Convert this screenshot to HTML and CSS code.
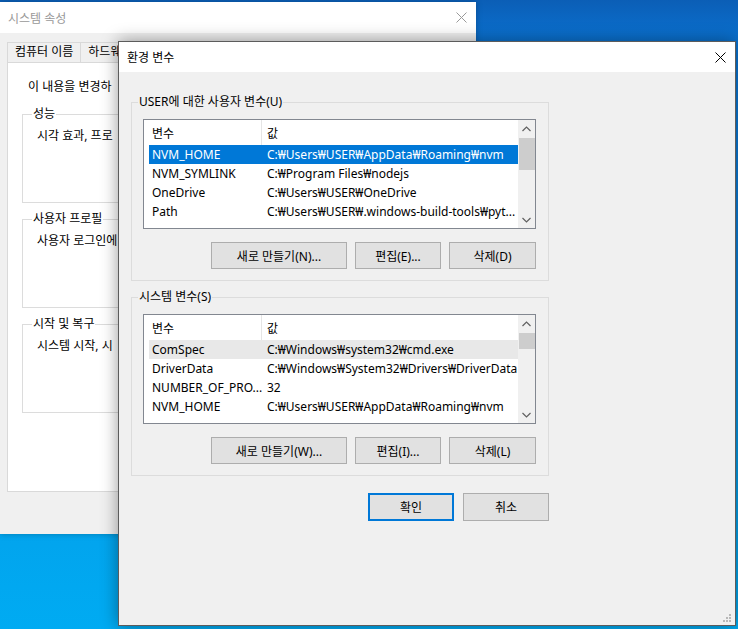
FILE: index.html
```html
<!DOCTYPE html>
<html lang="ko">
  <head>
    <meta charset="UTF-8" />
    <meta name="viewport" content="width=device-width, initial-scale=1.0" />
    <title>환경 변수</title>
    <link rel="stylesheet" href="styles.css">
  </head>
  <body>
    <div class="desktop">
      <!-- 뒤쪽 창: 시스템 속성 (대부분 앞 창에 가려짐) -->
      <div class="window sys-props">
        <div class="titlebar">
          <span class="title">시스템 속성</span>
          <svg class="close" width="11" height="11" viewBox="0 0 11 11">
            <path d="M0.5 0.5L10.5 10.5M10.5 0.5L0.5 10.5" />
          </svg>
        </div>
        <div class="tabs">
          <span class="tab">컴퓨터 이름</span>
          <span class="tab">하드웨</span>
        </div>
        <div class="tab-panel">
          <p class="notice">이 내용을 변경하</p>
          <fieldset class="sys-group">
            <legend>성능</legend>
            <p>시각 효과, 프로</p>
          </fieldset>
          <fieldset class="sys-group">
            <legend>사용자 프로필</legend>
            <p>사용자 로그인에</p>
          </fieldset>
          <fieldset class="sys-group">
            <legend>시작 및 복구</legend>
            <p>시스템 시작, 시</p>
          </fieldset>
        </div>
      </div>

      <!-- 앞쪽 창: 환경 변수 -->
      <div class="window env-vars">
        <div class="titlebar">
          <span class="title">환경 변수</span>
          <svg class="close" width="11" height="11" viewBox="0 0 11 11">
            <path d="M0.5 0.5L10.5 10.5M10.5 0.5L0.5 10.5" />
          </svg>
        </div>
        <div class="env-body">
          <fieldset class="env-group">
            <legend>USER에 대한 사용자 변수(U)</legend>
            <div class="listview">
              <div class="lv-main">
                <div class="lv-head">
                  <span class="col-name">변수</span>
                  <span class="col-value">값</span>
                </div>
                <div class="lv-row selected">
                  <span class="col-name">NVM_HOME</span>
                  <span class="col-value">C:₩Users₩USER₩AppData₩Roaming₩nvm</span>
                </div>
                <div class="lv-row">
                  <span class="col-name">NVM_SYMLINK</span>
                  <span class="col-value">C:₩Program Files₩nodejs</span>
                </div>
                <div class="lv-row">
                  <span class="col-name">OneDrive</span>
                  <span class="col-value">C:₩Users₩USER₩OneDrive</span>
                </div>
                <div class="lv-row">
                  <span class="col-name">Path</span>
                  <span class="col-value">C:₩Users₩USER₩.windows-build-tools₩pyt...</span>
                </div>
              </div>
              <div class="scrollbar">
                <span class="sb-arrow">
                  <svg width="9" height="6" viewBox="0 0 9 6"><path d="M0.5 5L4.5 1L8.5 5" /></svg>
                </span>
                <span class="sb-track"><span class="sb-thumb"></span></span>
                <span class="sb-arrow">
                  <svg width="9" height="6" viewBox="0 0 9 6"><path d="M0.5 1L4.5 5L8.5 1" /></svg>
                </span>
              </div>
            </div>
            <div class="btn-row">
              <button type="button" class="btn btn-new">새로 만들기(N)...</button>
              <button type="button" class="btn btn-edit">편집(E)...</button>
              <button type="button" class="btn btn-del">삭제(D)</button>
            </div>
          </fieldset>

          <fieldset class="env-group">
            <legend>시스템 변수(S)</legend>
            <div class="listview">
              <div class="lv-main">
                <div class="lv-head">
                  <span class="col-name">변수</span>
                  <span class="col-value">값</span>
                </div>
                <div class="lv-row inactive">
                  <span class="col-name">ComSpec</span>
                  <span class="col-value">C:₩Windows₩system32₩cmd.exe</span>
                </div>
                <div class="lv-row">
                  <span class="col-name">DriverData</span>
                  <span class="col-value">C:₩Windows₩System32₩Drivers₩DriverData</span>
                </div>
                <div class="lv-row">
                  <span class="col-name">NUMBER_OF_PRO...</span>
                  <span class="col-value">32</span>
                </div>
                <div class="lv-row">
                  <span class="col-name">NVM_HOME</span>
                  <span class="col-value">C:₩Users₩USER₩AppData₩Roaming₩nvm</span>
                </div>
              </div>
              <div class="scrollbar">
                <span class="sb-arrow">
                  <svg width="9" height="6" viewBox="0 0 9 6"><path d="M0.5 5L4.5 1L8.5 5" /></svg>
                </span>
                <span class="sb-track"><span class="sb-thumb small"></span></span>
                <span class="sb-arrow">
                  <svg width="9" height="6" viewBox="0 0 9 6"><path d="M0.5 1L4.5 5L8.5 1" /></svg>
                </span>
              </div>
            </div>
            <div class="btn-row">
              <button type="button" class="btn btn-new">새로 만들기(W)...</button>
              <button type="button" class="btn btn-edit">편집(I)...</button>
              <button type="button" class="btn btn-del">삭제(L)</button>
            </div>
          </fieldset>

          <div class="dialog-actions">
            <button type="button" class="btn btn-action default">확인</button>
            <button type="button" class="btn btn-action">취소</button>
          </div>
        </div>
        <svg class="grip" width="10" height="10" viewBox="0 0 10 10">
          <rect x="7" y="1" width="2" height="2" />
          <rect x="4" y="4" width="2" height="2" />
          <rect x="7" y="4" width="2" height="2" />
          <rect x="1" y="7" width="2" height="2" />
          <rect x="4" y="7" width="2" height="2" />
          <rect x="7" y="7" width="2" height="2" />
        </svg>
      </div>
    </div>
  </body>
</html>
```

FILE: styles.css
```css
* {
  box-sizing: border-box;
}

body {
  margin: 0;
  font-family: "Noto Sans", "Noto Sans CJK KR", sans-serif;
  font-size: 12px;
  color: #000;
}

.desktop {
  width: 738px;
  height: 629px;
  position: relative;
  overflow: hidden;
  background: linear-gradient(180deg, #0b5eb6 0%, #0a76d6 8%, #0a80dc 40%, #03a2ec 80%, #00abf2 100%);
}

.window {
  position: absolute;
  background: #f0f0f0;
}

.titlebar {
  display: flex;
  align-items: center;
  justify-content: space-between;
  background: #fff;
  padding: 0 9px 0 8px;
}

.close path {
  stroke-width: 1;
  fill: none;
}

/* 시스템 속성 (비활성 창) */
.sys-props {
  left: 0;
  top: 2px;
  width: 476px;
  height: 532px;
  box-shadow: 0 0 6px rgba(0, 0, 0, 0.25);
}

.sys-props .titlebar {
  height: 31px;
}

.sys-props .title {
  color: #999;
}

.sys-props .close path {
  stroke: #999;
}

.tabs {
  display: flex;
  margin: 9px 0 0 7px;
  height: 20px;
}

.tab {
  padding: 0 7px;
  line-height: 18px;
  border: 1px solid #d9d9d9;
  border-bottom: none;
  margin-right: -1px;
  background: #f0f0f0;
  white-space: nowrap;
}

.tab-panel {
  margin: 0 7px;
  height: 430px;
  background: #fff;
  border: 1px solid #d9d9d9;
  padding: 0 14px;
}

.notice {
  margin: 16px 0 0 6px;
  line-height: 16px;
  white-space: nowrap;
}

.sys-group {
  margin: 11px 0 0;
  border: 1px solid #dcdcdc;
  padding: 6px 14px 0;
}

.sys-group + .sys-group {
  margin-top: 8px;
}

.sys-group legend {
  padding: 0 1px;
  margin-left: -5px;
  line-height: 16px;
}

.sys-group p {
  margin: 0;
  height: 74px;
  line-height: 16px;
  white-space: nowrap;
}

/* 환경 변수 (활성 창) */
.env-vars {
  left: 118px;
  top: 41px;
  width: 618px;
  height: 585px;
  border: 1px solid #5c5c5c;
  box-shadow: 0 0 16px rgba(0, 0, 0, 0.4);
}

.env-vars .titlebar {
  height: 30px;
}

.env-vars .close path {
  stroke: #000;
}

.env-body {
  padding: 22px 0 0 12px;
}

.env-group {
  width: 418px;
  margin: 0;
  border: 1px solid #dcdcdc;
  padding: 9px 11px 11px;
}

.env-group + .env-group {
  margin-top: 8px;
}

.env-group legend {
  padding: 0 1px;
  margin-left: -5px;
  line-height: 16px;
}

.listview {
  display: flex;
  width: 393px;
  height: 110px;
  border: 1px solid #828790;
  background: #fff;
}

.lv-main {
  flex: 1;
  min-width: 0;
  overflow: hidden;
}

.lv-head {
  display: flex;
  height: 25px;
  padding-left: 5px;
}

.lv-row {
  display: flex;
  height: 19px;
  line-height: 19px;
  margin-left: 5px;
}

.lv-row.selected {
  background: #0078d7;
  color: #fff;
}

.lv-row.inactive {
  background: #e8e8e8;
}

.col-name {
  width: 113px;
  flex-shrink: 0;
  padding-left: 3px;
  white-space: nowrap;
  overflow: hidden;
}

.col-value {
  flex: 1;
  min-width: 0;
  padding-left: 5px;
  white-space: nowrap;
  overflow: hidden;
}

.lv-head span {
  display: flex;
  align-items: center;
}

.lv-head .col-name {
  border-right: 1px solid #e5e5e5;
}

.scrollbar {
  width: 17px;
  display: flex;
  flex-direction: column;
  background: #f0f0f0;
}

.sb-arrow {
  height: 17px;
  display: flex;
  align-items: center;
  justify-content: center;
}

.sb-arrow path {
  fill: none;
  stroke: #606060;
  stroke-width: 1.2;
}

.sb-track {
  flex: 1;
}

.sb-thumb {
  display: block;
  height: 32px;
  margin: 1px 0 0 1px;
  background: #cdcdcd;
}

.sb-thumb.small {
  height: 16px;
}

.btn-row {
  display: flex;
  justify-content: flex-end;
  gap: 8px;
  width: 393px;
  margin-top: 13px;
}

.btn {
  font-family: inherit;
  font-size: 12px;
  color: #000;
  height: 27px;
  padding: 0;
  background: #e1e1e1;
  border: 1px solid #adadad;
}

.btn-new {
  width: 136px;
}

.btn-edit {
  width: 86px;
}

.btn-del {
  width: 87px;
}

.dialog-actions {
  display: flex;
  justify-content: flex-end;
  gap: 9px;
  width: 418px;
  margin-top: 17px;
}

.btn-action {
  width: 86px;
  height: 28px;
}

.btn-action.default {
  border: 2px solid #0078d7;
}

.grip {
  position: absolute;
  right: 3px;
  bottom: 2px;
}

.grip rect {
  fill: #b8b8b8;
}
```
